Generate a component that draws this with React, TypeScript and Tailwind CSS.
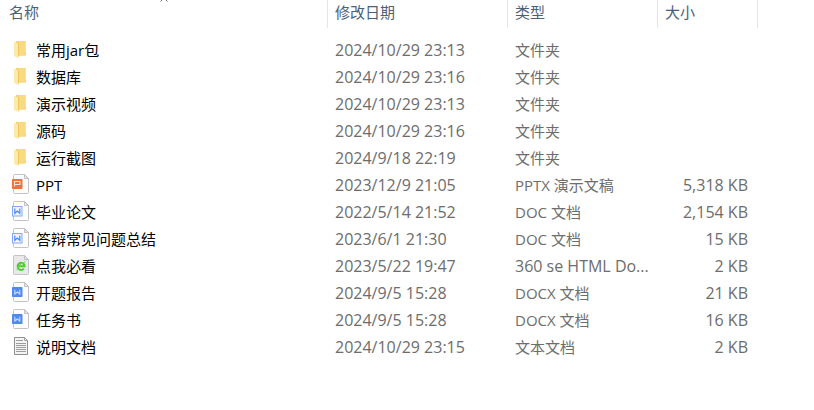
import type { ReactNode } from "react";

type FileKind = "folder" | "ppt" | "doc" | "docx" | "html" | "txt";

interface FileItem {
  name: string;
  date: string;
  type: string;
  size?: string;
  kind: FileKind;
}

const files: FileItem[] = [
  { name: "常用jar包", date: "2024/10/29 23:13", type: "文件夹", kind: "folder" },
  { name: "数据库", date: "2024/10/29 23:16", type: "文件夹", kind: "folder" },
  { name: "演示视频", date: "2024/10/29 23:13", type: "文件夹", kind: "folder" },
  { name: "源码", date: "2024/10/29 23:16", type: "文件夹", kind: "folder" },
  { name: "运行截图", date: "2024/9/18 22:19", type: "文件夹", kind: "folder" },
  { name: "PPT", date: "2023/12/9 21:05", type: "PPTX 演示文稿", size: "5,318 KB", kind: "ppt" },
  { name: "毕业论文", date: "2022/5/14 21:52", type: "DOC 文档", size: "2,154 KB", kind: "doc" },
  { name: "答辩常见问题总结", date: "2023/6/1 21:30", type: "DOC 文档", size: "15 KB", kind: "doc" },
  { name: "点我必看", date: "2023/5/22 19:47", type: "360 se HTML Do...", size: "2 KB", kind: "html" },
  { name: "开题报告", date: "2024/9/5 15:28", type: "DOCX 文档", size: "21 KB", kind: "docx" },
  { name: "任务书", date: "2024/9/5 15:28", type: "DOCX 文档", size: "16 KB", kind: "docx" },
  { name: "说明文档", date: "2024/10/29 23:15", type: "文本文档", size: "2 KB", kind: "txt" },
];

function Page({ fill = "#fdfdfd" }: { fill?: string }) {
  return (
    <>
      <path d="M4.5 .5H14.5L18.5 4.5V18.5Q18.5 19.5 17.5 19.5H4.5Q3.5 19.5 3.5 18.5V1.5Q3.5 .5 4.5 .5Z" fill={fill} stroke="#c4c4c6" />
      <path d="M14.5 .5V4.5H18.5Z" fill="#e4e4e6" stroke="#b8b8ba" strokeWidth=".8" />
    </>
  );
}

const drawings: Record<FileKind, ReactNode> = {
  folder: (
    <>
      <path d="M6 2H15.5V13.5H16V16.5H6Z" fill="#f3d071" />
      <path d="M8 2H15.5V16.5H8Z" fill="#f8da84" />
      <path d="M4 2.5L8 4.5V19L4 17Z" fill="#fde9a9" />
      <path d="M8 4.5V19L9 16.5V4Z" fill="#eec75f" />
    </>
  ),
  ppt: (
    <>
      <Page />
      <rect x="2" y="5" width="10.5" height="10" rx=".8" fill="#f5703a" />
      <path d="M4.5 12.5V7.5H10V10.5H5" fill="none" stroke="#ffe3d6" strokeWidth="1.1" />
    </>
  ),
  doc: (
    <>
      <Page />
      <rect x="2.5" y="5.5" width="9.5" height="9.5" fill="#f0f5ff" stroke="#7fa9f2" />
      <path d="M4.8 7.5V12.3L7.3 10L9.8 12.3V7.5" fill="none" stroke="#4f86ee" strokeWidth="1.2" />
    </>
  ),
  docx: (
    <>
      <Page />
      <rect x="2" y="5" width="10.5" height="10" rx=".8" fill="#4f8af0" />
      <path d="M4.8 7.7V12L7.3 10L9.8 12V7.7" fill="none" stroke="#c9dcff" strokeWidth="1.1" />
    </>
  ),
  html: (
    <>
      <Page fill="#e9e9eb" />
      <path d="M8.2 11.2H14.6A3.5 3.6 0 1 0 13.9 13.5" fill="none" stroke="#4bcb2c" strokeWidth="2" />
      <path d="M7.4 15.2C6 14.5 9 9 15.6 6.6" fill="none" stroke="#71d957" strokeWidth="1" />
    </>
  ),
  txt: (
    <>
      <path d="M4.5 1.5H14.5L17.5 4.5V18.5H4.5Z" fill="#f4f4f4" stroke="#8f8f8f" />
      <path d="M14.5 1.5V4.5H17.5Z" fill="#fff" stroke="#8f8f8f" strokeWidth=".8" />
      <path d="M6 4.5H13M6 7.5H16M6 9.5H16M6 11.5H16M6 13.5H16M6 15.5H16" stroke="#9d9d9d" />
    </>
  ),
};

function FileIcon({ kind }: { kind: FileKind }) {
  return (
    <svg className="h-6 w-5 shrink-0" viewBox="0 -1 20 24" aria-hidden="true">
      {drawings[kind]}
    </svg>
  );
}

function HeaderCell({ label, className = "pl-[7px]" }: { label: string; className?: string }) {
  return (
    <th scope="col" className={`h-7 border-r border-[#e5e5e5] p-0 text-left align-top font-normal ${className}`}>
      <button type="button" className="block h-6 w-full text-left text-[#4c607a]">
        {label}
      </button>
    </th>
  );
}

export default function App() {
  return (
    <main className="relative min-h-screen bg-white pr-14 font-['Open_Sans','Noto_Sans_CJK_SC',sans-serif] text-[15px] leading-6">
      <svg className="absolute top-0 left-40 h-1 w-2" viewBox="0 0 8 4" fill="none" stroke="#6d6d6d" aria-hidden="true">
        <path d="M.5 1.5L2.5 -.5M7.5 1.5L5.5 -.5" />
      </svg>
      <table className="w-full table-fixed border-separate border-spacing-0">
        <colgroup>
          <col />
          <col className="w-[180px]" />
          <col className="w-[150px]" />
          <col className="w-[100px]" />
        </colgroup>
        <thead>
          <tr>
            <HeaderCell label="名称" className="pl-[9px]" />
            <HeaderCell label="修改日期" />
            <HeaderCell label="类型" />
            <HeaderCell label="大小" />
          </tr>
        </thead>
        <tbody className="text-[#6d6d6d] before:block before:h-2 before:content-['']">
          {files.map((file) => (
            <tr key={file.name} className="h-[27px]">
              <td className="p-0 pl-2.5 text-black">
                <div className="flex items-center gap-1.5">
                  <FileIcon kind={file.kind} />
                  <span className="truncate">{file.name}</span>
                </div>
              </td>
              <td className="p-0 pl-[7px] text-base">{file.date}</td>
              <td className={`p-0 pl-[7px] whitespace-nowrap ${file.kind === "html" ? "text-base" : ""}`}>{file.type}</td>
              <td className="p-0 pr-2.5 text-right text-base whitespace-nowrap">{file.size}</td>
            </tr>
          ))}
        </tbody>
      </table>
    </main>
  );
}
